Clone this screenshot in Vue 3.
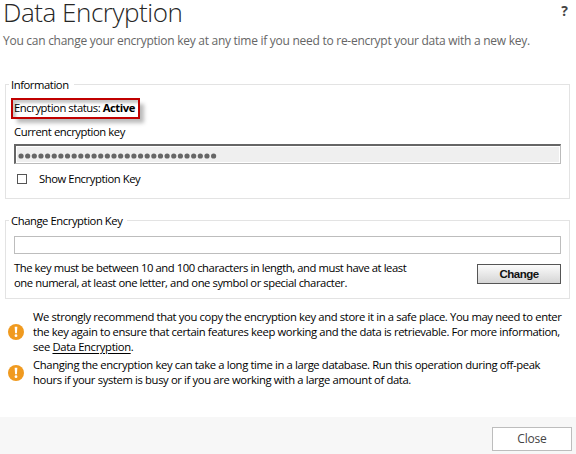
<template>
  <main class="dialog">
    <header class="header">
      <div class="header__top">
        <h1 class="header__title">Data Encryption</h1>
        <button class="header__help" type="button" aria-label="Help">?</button>
      </div>
      <p class="header__text">You can change your encryption key at any time if you need to re-encrypt your data with a new key.</p>
    </header>

    <fieldset class="group group--info">
      <legend class="group__legend">Information</legend>
      <div class="status">Encryption status: <b class="status__value">{{ status }}</b></div>
      <label class="group__label" for="current">Current encryption key</label>
      <div id="current" class="key">
        <span v-if="showKey" class="key__text">{{ currentKey }}</span>
        <svg v-else class="key__dots" width="204" height="6" viewBox="0 0 204 6">
          <circle v-for="n in keyLength" :key="n" :cx="n * 6.64 - 3.6" cy="3" r="2.6" />
        </svg>
      </div>
      <label class="check">
        <input v-model="showKey" class="check__box" type="checkbox" />
        <span class="check__text">Show Encryption Key</span>
      </label>
    </fieldset>

    <fieldset class="group group--change">
      <legend class="group__legend">Change Encryption Key</legend>
      <input v-model="newKey" class="group__input" type="text" />
      <div class="change">
        <p class="change__text">
          The key must be between 10 and 100 characters in length, and must have at least<br />
          one numeral, at least one letter, and one symbol or special character.
        </p>
        <button class="change__button" type="button">Change</button>
      </div>
    </fieldset>

    <ul class="notices">
      <li v-for="(notice, index) in notices" :key="index" class="notice">
        <svg class="notice__icon" width="16" height="16" viewBox="0 0 16 16">
          <circle cx="8" cy="8" r="8" fill="#f09a1f" />
          <path d="M6.7 2.8h2.6l-.4 6.4H7.1z" fill="#fff" />
          <circle cx="8" cy="11.7" r="1.4" fill="#fff" />
        </svg>
        <p class="notice__text">
          <span v-for="line in notice.lines" :key="line" class="notice__line">{{ line }}</span>
          <span v-if="notice.link" class="notice__line">see <a class="notice__link" href="#">{{ notice.link }}</a>.</span>
        </p>
      </li>
    </ul>

    <footer class="footer">
      <button class="footer__close" type="button">Close</button>
    </footer>
  </main>
</template>

<script setup>
import { ref } from "vue";

const status = "Active";
const keyLength = 30;
const currentKey = "";
const showKey = ref(false);
const newKey = ref("");

const notices = [
  {
    lines: [
      "We strongly recommend that you copy the encryption key and store it in a safe place. You may need to enter",
      "the key again to ensure that certain features keep working and the data is retrievable. For more information,"
    ],
    link: "Data Encryption"
  },
  {
    lines: [
      "Changing the encryption key can take a long time in a large database. Run this operation during off-peak",
      "hours if your system is busy or if you are working with a large amount of data."
    ]
  }
];
</script>

<style>
body {
    background: white;
    overflow: hidden;
}
</style>

<style scoped>
.dialog {
    box-sizing: border-box;
    display: flex;
    flex-direction: column;
    width: 576px;
    height: 454px;
    background: white;
    color: #000;
    font-family: "Open Sans", "Noto Sans", sans-serif;
    font-size: 11.25px;
    line-height: 15px;
    letter-spacing: -0.43px;
    white-space: nowrap;
}
.dialog * {
    box-sizing: border-box;
}
.header {
    height: 84px;
    padding-left: 3px;
}
.header__top {
    display: flex;
    justify-content: space-between;
    height: 33px;
    padding-right: 8px;
}
.header__title {
    height: 26px;
    margin: 0;
    color: #262626;
    font-size: 26px;
    font-weight: 300;
    line-height: 24px;
    letter-spacing: -0.45px;
}
.header__help {
    height: 20px;
    padding: 0;
    border: 0;
    background: none;
    color: #444;
    font: bold 14px/21px "Open Sans", sans-serif;
}
.header__text {
    margin: 0;
    color: #666;
    font-size: 12px;
    line-height: 16px;
    letter-spacing: -0.27px;
}
.group {
    width: 565px;
    min-width: 0;
    margin: 0 0 0 5px;
    padding: 0 8px;
    border: 1px solid #e3e3e3;
}
.group--info {
    height: 122px;
    margin-top: -7px;
}
.group--change {
    height: 86px;
    margin-top: 14px;
}
.group__legend {
    height: 15px;
    margin-left: -5px;
    padding: 0 5px 0 2px;
}
.status {
    width: 129px;
    height: 21px;
    margin: 6px 0 0 -3px;
    padding-left: 1px;
    border: 2px solid #c00000;
    line-height: 16px;
    box-shadow: 5px 5px 4px -1px #bbb, inset 3px 3px 3px #c8c8c8;
}
.status__value {
    letter-spacing: -0.45px;
}
.group__label {
    display: block;
    margin-top: 5px;
}
.key {
    display: flex;
    align-items: center;
    width: 547px;
    height: 20px;
    margin-top: 5px;
    padding: 3px 0 0 2px;
    border: 1px solid #bbb;
    border-top: 2px solid #666;
    border-left: 2px solid #666;
    background: #efefef;
    box-shadow: inset 0 0 0 1px white;
}
.key__dots {
    fill: #666;
}
.check {
    display: flex;
    align-items: center;
    gap: 12px;
    margin: 7px 0 0 3px;
}
.check__box {
    appearance: none;
    width: 10px;
    height: 10px;
    margin: 0;
    border: 1px solid #555;
    background: white;
}
.group__input {
    display: block;
    width: 547px;
    height: 18px;
    margin-top: 8px;
    padding: 0 2px;
    border: 1px solid #bdbdbd;
    outline: 0;
}
.change {
    display: flex;
    justify-content: space-between;
    width: 547px;
    margin-top: 6px;
}
.change__text {
    margin: 0;
}
.change__button {
    width: 84px;
    height: 20px;
    margin-top: 4px;
    padding: 0;
    border: 1px solid #555;
    background: linear-gradient(#fbfbfb, #d5d5d5);
    color: #111;
    font: bold 11.5px/18px "Liberation Sans", sans-serif;
    letter-spacing: -0.5px;
}
.notices {
    display: flex;
    flex-direction: column;
    gap: 4px;
    margin: 11px 0 0;
    padding: 0 0 0 8px;
    list-style: none;
}
.notice {
    display: flex;
    align-items: center;
    gap: 9px;
}
.notice__icon {
    flex: none;
}
.notice__text {
    margin: 0;
    letter-spacing: -0.37px;
}
.notice__line {
    display: block;
    line-height: 14.8px;
}
.notice__link {
    color: inherit;
    text-underline-offset: 2px;
}
.footer {
    display: flex;
    justify-content: flex-end;
    height: 37px;
    margin-top: auto;
    padding: 10px 4px 0 0;
    background: #f7f7f7;
}
.footer__close {
    width: 80px;
    height: 24px;
    padding: 0;
    border: 1px solid #bdbdbd;
    background: white;
    color: #444;
    font: 12px/22px "Open Sans", sans-serif;
    letter-spacing: -0.2px;
}
</style>
